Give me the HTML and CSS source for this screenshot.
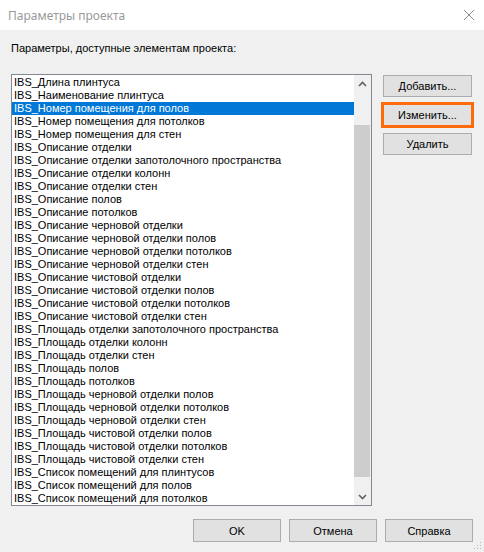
FILE: index.html
```html
<!DOCTYPE html>
<html lang="ru">
<head>
<meta charset="utf-8">
<title>Параметры проекта</title>
<link rel="stylesheet" href="styles.css">
</head>
<body>
<div class="window">
  <div class="titlebar">
    <span class="title">Параметры проекта</span>
    <svg class="close" width="12" height="12" viewBox="0 0 12 12"><path d="M1 1L11 11M11 1L1 11" stroke="#8a8a8a" stroke-width="1" fill="none"/></svg>
  </div>
  <div class="content">
    <div class="label">Параметры, доступные элементам проекта:</div>
    <div class="main">
      <div class="listbox">
        <ul class="items">
          <li>IBS_Длина плинтуса</li>
          <li>IBS_Наименование плинтуса</li>
          <li class="selected">IBS_Номер помещения для полов</li>
          <li>IBS_Номер помещения для потолков</li>
          <li>IBS_Номер помещения для стен</li>
          <li>IBS_Описание отделки</li>
          <li>IBS_Описание отделки запотолочного пространства</li>
          <li>IBS_Описание отделки колонн</li>
          <li>IBS_Описание отделки стен</li>
          <li>IBS_Описание полов</li>
          <li>IBS_Описание потолков</li>
          <li>IBS_Описание черновой отделки</li>
          <li>IBS_Описание черновой отделки полов</li>
          <li>IBS_Описание черновой отделки потолков</li>
          <li>IBS_Описание черновой отделки стен</li>
          <li>IBS_Описание чистовой отделки</li>
          <li>IBS_Описание чистовой отделки полов</li>
          <li>IBS_Описание чистовой отделки потолков</li>
          <li>IBS_Описание чистовой отделки стен</li>
          <li>IBS_Площадь отделки запотолочного пространства</li>
          <li>IBS_Площадь отделки колонн</li>
          <li>IBS_Площадь отделки стен</li>
          <li>IBS_Площадь полов</li>
          <li>IBS_Площадь потолков</li>
          <li>IBS_Площадь черновой отделки полов</li>
          <li>IBS_Площадь черновой отделки потолков</li>
          <li>IBS_Площадь черновой отделки стен</li>
          <li>IBS_Площадь чистовой отделки полов</li>
          <li>IBS_Площадь чистовой отделки потолков</li>
          <li>IBS_Площадь чистовой отделки стен</li>
          <li>IBS_Список помещений для плинтусов</li>
          <li>IBS_Список помещений для полов</li>
          <li>IBS_Список помещений для потолков</li>
        </ul>
        <div class="scrollbar">
          <div class="arrow">
            <svg width="9" height="6" viewBox="0 0 9 6"><path d="M1 5L4.5 1.5L8 5" stroke="#606060" stroke-width="1.6" fill="none"/></svg>
          </div>
          <div class="track"><div class="thumb"></div></div>
          <div class="arrow">
            <svg width="9" height="6" viewBox="0 0 9 6"><path d="M1 1L4.5 4.5L8 1" stroke="#606060" stroke-width="1.6" fill="none"/></svg>
          </div>
        </div>
      </div>
      <div class="side">
        <button class="btn">Добавить...</button>
        <button class="btn focused">Изменить...</button>
        <button class="btn">Удалить</button>
      </div>
    </div>
    <div class="footer">
      <button class="btn wide">OK</button>
      <button class="btn wide">Отмена</button>
      <button class="btn wide">Справка</button>
    </div>
    <svg class="grip" width="8" height="8" viewBox="0 0 8 8">
      <rect x="6" y="0" width="1" height="1" fill="#b8b8b8"/>
      <rect x="3" y="3" width="1" height="1" fill="#b8b8b8"/>
      <rect x="6" y="3" width="1" height="1" fill="#b8b8b8"/>
      <rect x="0" y="6" width="1" height="1" fill="#b8b8b8"/>
      <rect x="3" y="6" width="1" height="1" fill="#b8b8b8"/>
      <rect x="6" y="6" width="1" height="1" fill="#b8b8b8"/>
    </svg>
  </div>
</div>
</body>
</html>
```
FILE: styles.css
```css
* { box-sizing: border-box; }
html, body {
  margin: 0;
  padding: 0;
  width: 484px;
  height: 552px;
  overflow: hidden;
  background: #f0f0f0;
}
.window {
  width: 484px;
  height: 552px;
  display: flex;
  flex-direction: column;
  font-family: "Liberation Sans", Arial, sans-serif;
  font-size: 11px;
  color: #000;
}
.titlebar {
  height: 30px;
  background: #fff;
  display: flex;
  align-items: center;
  justify-content: space-between;
  padding: 0 9px 0 8px;
}
.title {
  font-family: "Noto Sans", "Open Sans", sans-serif;
  font-size: 12px;
  color: #999;
}
.close { display: block; }
.content {
  flex: 1;
  position: relative;
  padding: 0 11px 0 11px;
  display: flex;
  flex-direction: column;
}
.label {
  height: 44px;
  padding-top: 12px;
  line-height: 13px;
}
.main {
  display: flex;
  gap: 11px;
  align-items: flex-start;
}
.listbox {
  width: 361px;
  height: 432px;
  border: 1px solid #828790;
  background: #fff;
  display: flex;
}
.items {
  list-style: none;
  margin: 0;
  padding: 1px 0 0 0;
  flex: 1;
  overflow: hidden;
}
.items li {
  height: 13px;
  line-height: 13px;
  padding-left: 2px;
  white-space: nowrap;
  overflow: hidden;
}
.items li.selected {
  background: #0078d7;
  color: #fff;
}
.scrollbar {
  width: 17px;
  background: #f0f0f0;
  display: flex;
  flex-direction: column;
}
.arrow {
  height: 17px;
  display: flex;
  align-items: center;
  justify-content: center;
}
.arrow svg { display: block; }
.track {
  flex: 1;
  padding: 33px 1px 11px 0;
  display: flex;
}
.thumb {
  flex: 1;
  background: #cdcdcd;
}
.side {
  display: flex;
  flex-direction: column;
  gap: 7px;
  padding-top: 1px;
}
.btn {
  width: 89px;
  height: 22px;
  border: 1px solid #adadad;
  background: #e1e1e1;
  font-family: "Liberation Sans", Arial, sans-serif;
  font-size: 11px;
  color: #000;
  padding: 0;
  margin: 0;
}
.btn.focused {
  outline: 3px solid #ff6a0a;
  outline-offset: -1px;
}
.footer {
  display: flex;
  justify-content: flex-end;
  gap: 8px;
  margin-top: 13px;
}
.btn.wide { width: 88px; height: 23px; }
.grip {
  position: absolute;
  right: 2px;
  bottom: 2px;
}
```
